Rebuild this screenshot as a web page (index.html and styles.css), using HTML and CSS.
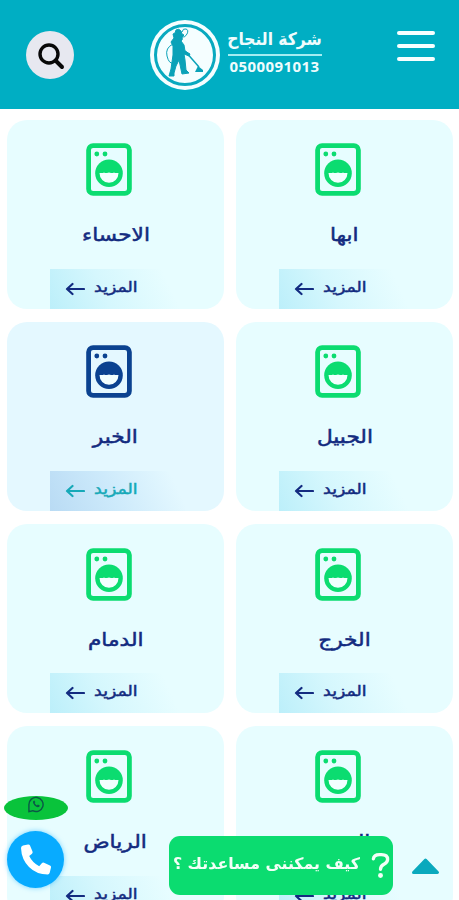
FILE: index.html
```html
<!DOCTYPE html>
<html lang="ar" dir="rtl">
<head>
<meta charset="utf-8">
<meta name="viewport" content="width=device-width, initial-scale=1">
<title>شركة النجاح</title>
<link rel="stylesheet" href="styles.css">
</head>
<body>
<svg class="sprite" aria-hidden="true">
  <symbol id="washer" viewBox="0 0 46 53">
    <rect x="2.6" y="2.6" width="40.8" height="47.8" rx="4.5" fill="none" stroke="currentColor" stroke-width="4.8"/>
    <circle cx="10.8" cy="11" r="2.4" fill="currentColor"/>
    <circle cx="19" cy="11" r="2.4" fill="currentColor"/>
    <circle cx="23" cy="30.3" r="13.8" fill="currentColor"/>
    <path d="M13.500 30h3.500q1-1.200 2 0h2q2-1.200 4 0h2q1-1.200 2 0h3.500a9.500 9.800 0 0 1-19 0z" fill="#f2ffff"/>
  </symbol>
  <symbol id="arrow" viewBox="0 0 20 14">
    <path d="M19 7H2M7.500 2L2 7l5.500 5" fill="none" stroke="currentColor" stroke-width="2.200" stroke-linecap="round" stroke-linejoin="round"/>
  </symbol>
</svg>

<header class="header">
  <button class="menu" aria-label="القائمة"><span></span><span></span><span></span></button>
  <a class="brand">
    <div class="brand-text">
      <strong class="brand-name"><span>شركة النجاح</span></strong>
      <span class="brand-phone">0500091013</span>
    </div>
    <svg class="logo" viewBox="0 0 70 70">
      <circle cx="35" cy="35" r="35" fill="#f5feff"/>
      <circle cx="35" cy="35" r="29.500" fill="none" stroke="#09a9bf" stroke-width="3"/>
      <g fill="#0aa2b8">
        <path d="M23 14l2-1 1-3q3-2 5 1l1 3 2 1-2 2q1 3-1 4l3 4 1 6 5 3-1 2-5-2 1 6 1 10 3 3-7 1-3-14-3 6-2 7 0 3h-5l2-7 2-14 0-9-2-4 3-4z" stroke="#0aa2b8"/>
        <path d="M46 50l2-4 5 4v2h-8z"/>
      </g>
      <path d="M35 31l14 16" stroke="#0aa2b8" stroke-width="1.500"/>
      <path d="M23 24q-8 4-6 12t6 7M32 12q1-4 4-3t1 5-5 3" fill="none" stroke="#0aa2b8" stroke-width="1"/>
    </svg>
  </a>
  <button class="search" aria-label="بحث">
    <svg viewBox="0 0 48 48"><circle cx="23" cy="23" r="9" fill="none" stroke="#080808" stroke-width="3.400"/><path d="M29.500 29.500l6.500 6.500" stroke="#080808" stroke-width="4" stroke-linecap="round"/></svg>
  </button>
</header>

<main class="grid">
  <article class="card"><svg class="icon"><use href="#washer"/></svg><h2>ابها</h2><a class="more"><span>المزيد</span><svg><use href="#arrow"/></svg></a></article>
  <article class="card"><svg class="icon"><use href="#washer"/></svg><h2>الاحساء</h2><a class="more"><span>المزيد</span><svg><use href="#arrow"/></svg></a></article>
  <article class="card"><svg class="icon"><use href="#washer"/></svg><h2>الجبيل</h2><a class="more"><span>المزيد</span><svg><use href="#arrow"/></svg></a></article>
  <article class="card active"><svg class="icon"><use href="#washer"/></svg><h2>الخبر</h2><a class="more"><span>المزيد</span><svg><use href="#arrow"/></svg></a></article>
  <article class="card"><svg class="icon"><use href="#washer"/></svg><h2>الخرج</h2><a class="more"><span>المزيد</span><svg><use href="#arrow"/></svg></a></article>
  <article class="card"><svg class="icon"><use href="#washer"/></svg><h2>الدمام</h2><a class="more"><span>المزيد</span><svg><use href="#arrow"/></svg></a></article>
  <article class="card"><svg class="icon"><use href="#washer"/></svg><h2>الرس</h2><a class="more"><span>المزيد</span><svg><use href="#arrow"/></svg></a></article>
  <article class="card"><svg class="icon"><use href="#washer"/></svg><h2>الرياض</h2><a class="more"><span>المزيد</span><svg><use href="#arrow"/></svg></a></article>
</main>

<a class="whatsapp" aria-label="واتساب">
  <svg viewBox="0 0 18 18" fill="none" stroke="#0c5747" stroke-width="1.500"><path d="M1.500 16.500V9a7.500 7.500 0 1 1 4 6.600z"/><path d="M6 5.500q-1 2 1.500 4.500t5 1.500l.5-1.500-2-1-1 1q-1.500-.5-2.500-2.500l.8-1-1-1.700z" fill="#0c5747" stroke="none"/></svg>
</a>
<a class="call" aria-label="اتصال">
  <svg viewBox="0 0 32 32"><path d="M3.500 1.500L8.500.5q1.500-.2 2 1l2.500 6q.5 1.300-.5 2.200L9.700 12q3.300 6.800 10 10.200l2.600-3q.9-1 2.200-.5l6 2.700q1.300.6 1 2l-1.300 5.400q-.4 1.700-2 1.700Q17 30.500 9.500 23T1.500 4q0-2 2-2.500z" fill="#fff"/></svg>
</a>
<a class="help">
  <svg viewBox="0 0 20 27"><path d="M2.500 6.500Q3 2 9 2h2q6.500 0 6.500 5 0 3-3.500 5-4 2-4 5.500" fill="none" stroke="#f3fff7" stroke-width="3.500" stroke-linecap="round"/><circle cx="10" cy="24" r="2.600" fill="#f3fff7"/></svg>
  <span>كيف يمكننى مساعدتك ؟</span>
</a>
<a class="to-top" aria-label="أعلى"><svg viewBox="0 0 28 18"><path d="M14 3L26 15.500H2z" fill="#0aa9bd" stroke="#0aa9bd" stroke-width="3" stroke-linejoin="round"/></svg></a>
</body>
</html>
```

FILE: styles.css
```css
* { box-sizing: border-box; }
html, body { height: 100%; }
body {
  margin: 0;
  overflow: hidden;
  background: #fff;
  color: #132b80;
  font-family: "DejaVu Sans", sans-serif;
}
button { border: 0; padding: 0; }
svg { display: block; }
.sprite { position: absolute; width: 0; height: 0; }

.header {
  display: flex;
  align-items: flex-start;
  justify-content: space-between;
  height: 109px;
  padding: 0 24px 0 26px;
  background: #00aec3;
}
.menu {
  display: flex;
  flex-direction: column;
  gap: 9px;
  width: 38px;
  margin-top: 31px;
  background: none;
}
.menu span { height: 4px; border-radius: 2px; background: #f8ffff; }
.brand { display: flex; gap: 8px; margin-top: 20px; }
.brand-text { width: 94px; margin-top: 8px; color: #effcfd; }
.brand-name {
  display: flex;
  justify-content: center;
  height: 28px;
  border-bottom: 2px solid #a4edf2;
  font-size: 15.500px;
  line-height: 24px;
  white-space: nowrap;
}
.brand-name span { transform: scaleY(1.12); }
.brand-phone {
  display: block;
  direction: ltr;
  font: 700 15px/20px "Open Sans", sans-serif;
  letter-spacing: 0.4px;
  text-align: center;
}
.logo { width: 70px; height: 70px; }
.search {
  width: 48px;
  height: 48px;
  margin-top: 31px;
  border-radius: 50%;
  background: #e7e8f0;
}
.search svg { width: 48px; height: 48px; }

.grid {
  display: grid;
  grid-template-columns: 217px 217px;
  grid-auto-rows: 189.300px;
  gap: 13px 12px;
  padding: 10.500px 6px 0 0;
}
.card {
  display: flex;
  flex-direction: column;
  align-items: center;
  overflow: hidden;
  padding-top: 23.500px;
  border-radius: 20px;
  background: #e7fdff;
}
.icon { width: 46px; height: 53px; margin-right: 13px; color: #0bdc70; }
.card h2 {
  height: 30px;
  margin: 22px 0 0;
  font-size: 18.500px;
  font-weight: 400;
  line-height: 33px;
  -webkit-text-stroke: 0.500px currentColor;
  transform: scaleX(1.17);
  white-space: nowrap;
}
.more {
  display: flex;
  align-items: flex-start;
  align-self: flex-end;
  gap: 16px;
  width: 135px;
  height: 40px;
  margin-top: auto;
  margin-left: 43px;
  padding: 6px 48px 0 0;
  background: linear-gradient(65deg, #bceffa, #d5f7fd 40%, #e7fdff 85%);
  font-size: 14.500px;
  line-height: 24px;
}
.more span {
  -webkit-text-stroke: 0.500px currentColor;
  transform: scaleX(1.190);
  transform-origin: right;
}
.more svg { width: 20px; height: 14px; margin-top: 7px; }
.card.active { background: #e4f8ff; }
.active .icon { color: #0b4290; }
.active .more { background: linear-gradient(65deg, #b9dbf4, #cdeafb 45%, #e4f8ff 90%); color: #16a9b8; }

.whatsapp, .call, .help, .to-top { position: fixed; display: flex; }
.whatsapp { left: 4px; top: 796px; width: 64px; height: 24px; border-radius: 50%; background: #09c33b; }
.whatsapp svg { width: 18px; height: 17px; margin: 0 23px 0 0; }
.call {
  left: 7px;
  top: 831px;
  align-items: center;
  justify-content: center;
  width: 57px;
  height: 57px;
  border-radius: 50%;
  background: #08abff;
  box-shadow: 0 0 5px #08abff80;
}
.call svg { width: 33px; height: 32px; }
.help {
  left: 169px;
  top: 836px;
  width: 224px;
  height: 59px;
  gap: 11px;
  padding: 16px 3px 0 0;
  border-radius: 11px;
  background: #0bdc70;
  color: #f3fff7;
  font-size: 15.800px;
  font-weight: 700;
  line-height: 24px;
  white-space: nowrap;
}
.help svg { flex: none; width: 19px; height: 27px; }
.to-top { left: 411px; top: 857px; }
.to-top svg { width: 29px; height: 18px; }
```
